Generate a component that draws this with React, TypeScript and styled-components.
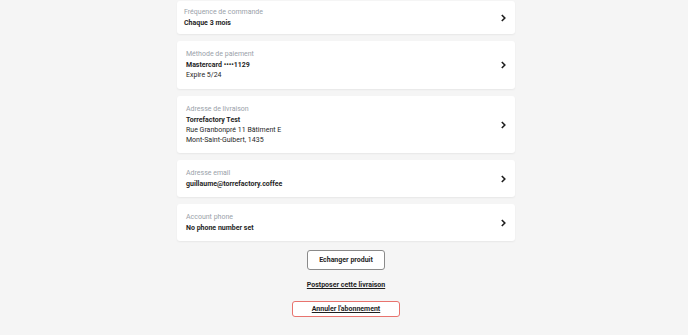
import React from "react";
import styled, { createGlobalStyle } from "styled-components";

const Global = createGlobalStyle`
  html, body { margin: 0; padding: 0; background: #f5f5f5; }
  body { font-family: Roboto, "Noto Sans", sans-serif; -webkit-font-smoothing: antialiased; }
`;

const Page = styled.div`
  display: flex;
  justify-content: center;
  padding: 1px 0 0 4px;
`;

const Column = styled.div`
  width: 338px;
  display: flex;
  flex-direction: column;
  gap: 7px;
`;

const Card = styled.div<{ $compact?: boolean; $padBottom?: number }>`
  background: #fff;
  border-radius: 3px;
  box-shadow: 0 1px 2px rgba(0, 0, 0, 0.06);
  display: flex;
  align-items: center;
  justify-content: space-between;
  padding: ${(p) => (p.$compact ? "6px 8px 6px 7px" : `8px 8px ${p.$padBottom ?? 8}px 9px`)};
`;

const Info = styled.div`
  display: flex;
  flex-direction: column;
`;

const Label = styled.div`
  font-size: 7px;
  line-height: 10px;
  color: #9aa1a9;
  margin-bottom: 1px;
`;

const Line = styled.div<{ $bold?: boolean }>`
  font-size: 7px;
  line-height: 10px;
  color: #1f1f1f;
  font-weight: ${(p) => (p.$bold ? 700 : 400)};
`;

const Chevron = () => (
  <svg width="7" height="8" viewBox="0 0 7 8" style={{ flex: "none" }}>
    <path d="M1.8 1 L4.8 4 L1.8 7" fill="none" stroke="#1f1f1f" strokeWidth="1.6" />
  </svg>
);

const Actions = styled.div`
  display: flex;
  flex-direction: column;
  align-items: center;
  padding-top: 2px;
`;

const OutlineButton = styled.button<{ $danger?: boolean }>`
  font-family: inherit;
  background: #fff;
  border: 1px solid ${(p) => (p.$danger ? "#e8736e" : "#8a8a8a")};
  border-radius: 3px;
  font-size: 7px;
  font-weight: 700;
  color: #1f1f1f;
  cursor: pointer;
  text-decoration: ${(p) => (p.$danger ? "underline" : "none")};
  padding: ${(p) => (p.$danger ? "3px 19px" : "5px 11px")};
  line-height: 8px;
`;

const LinkButton = styled.button`
  font-family: inherit;
  background: none;
  border: none;
  font-size: 7px;
  font-weight: 700;
  color: #1f1f1f;
  text-decoration: underline;
  padding: 0;
  margin: 10px 0 11px;
  line-height: 10px;
  cursor: pointer;
`;

type Row = {
  label: string;
  lines: { text: string; bold?: boolean }[];
  compact?: boolean;
  padBottom?: number;
};

const rows: Row[] = [
  { label: "Fréquence de commande", lines: [{ text: "Chaque 3 mois", bold: true }], compact: true },
  {
    label: "Méthode de paiement",
    lines: [{ text: "Mastercard ••••1129", bold: true }, { text: "Expire 5/24" }],
    padBottom: 9,
  },
  {
    label: "Adresse de livraison",
    lines: [
      { text: "Torrefactory Test", bold: true },
      { text: "Rue Granbonpré 11 Bâtiment E" },
      { text: "Mont-Saint-Guibert, 1435" },
    ],
  },
  { label: "Adresse email", lines: [{ text: "guillaume@torrefactory.coffee", bold: true }] },
  { label: "Account phone", lines: [{ text: "No phone number set", bold: true }] },
];

export default function App() {
  return (
    <>
      <Global />
      <Page>
        <Column>
          {rows.map((r) => (
            <Card key={r.label} $compact={r.compact} $padBottom={r.padBottom}>
              <Info>
                <Label>{r.label}</Label>
                {r.lines.map((l) => (
                  <Line key={l.text} $bold={l.bold}>
                    {l.text}
                  </Line>
                ))}
              </Info>
              <Chevron />
            </Card>
          ))}
          <Actions>
            <OutlineButton>Echanger produit</OutlineButton>
            <LinkButton>Postposer cette livraison</LinkButton>
            <OutlineButton $danger>Annuler l'abonnement</OutlineButton>
          </Actions>
        </Column>
      </Page>
    </>
  );
}
